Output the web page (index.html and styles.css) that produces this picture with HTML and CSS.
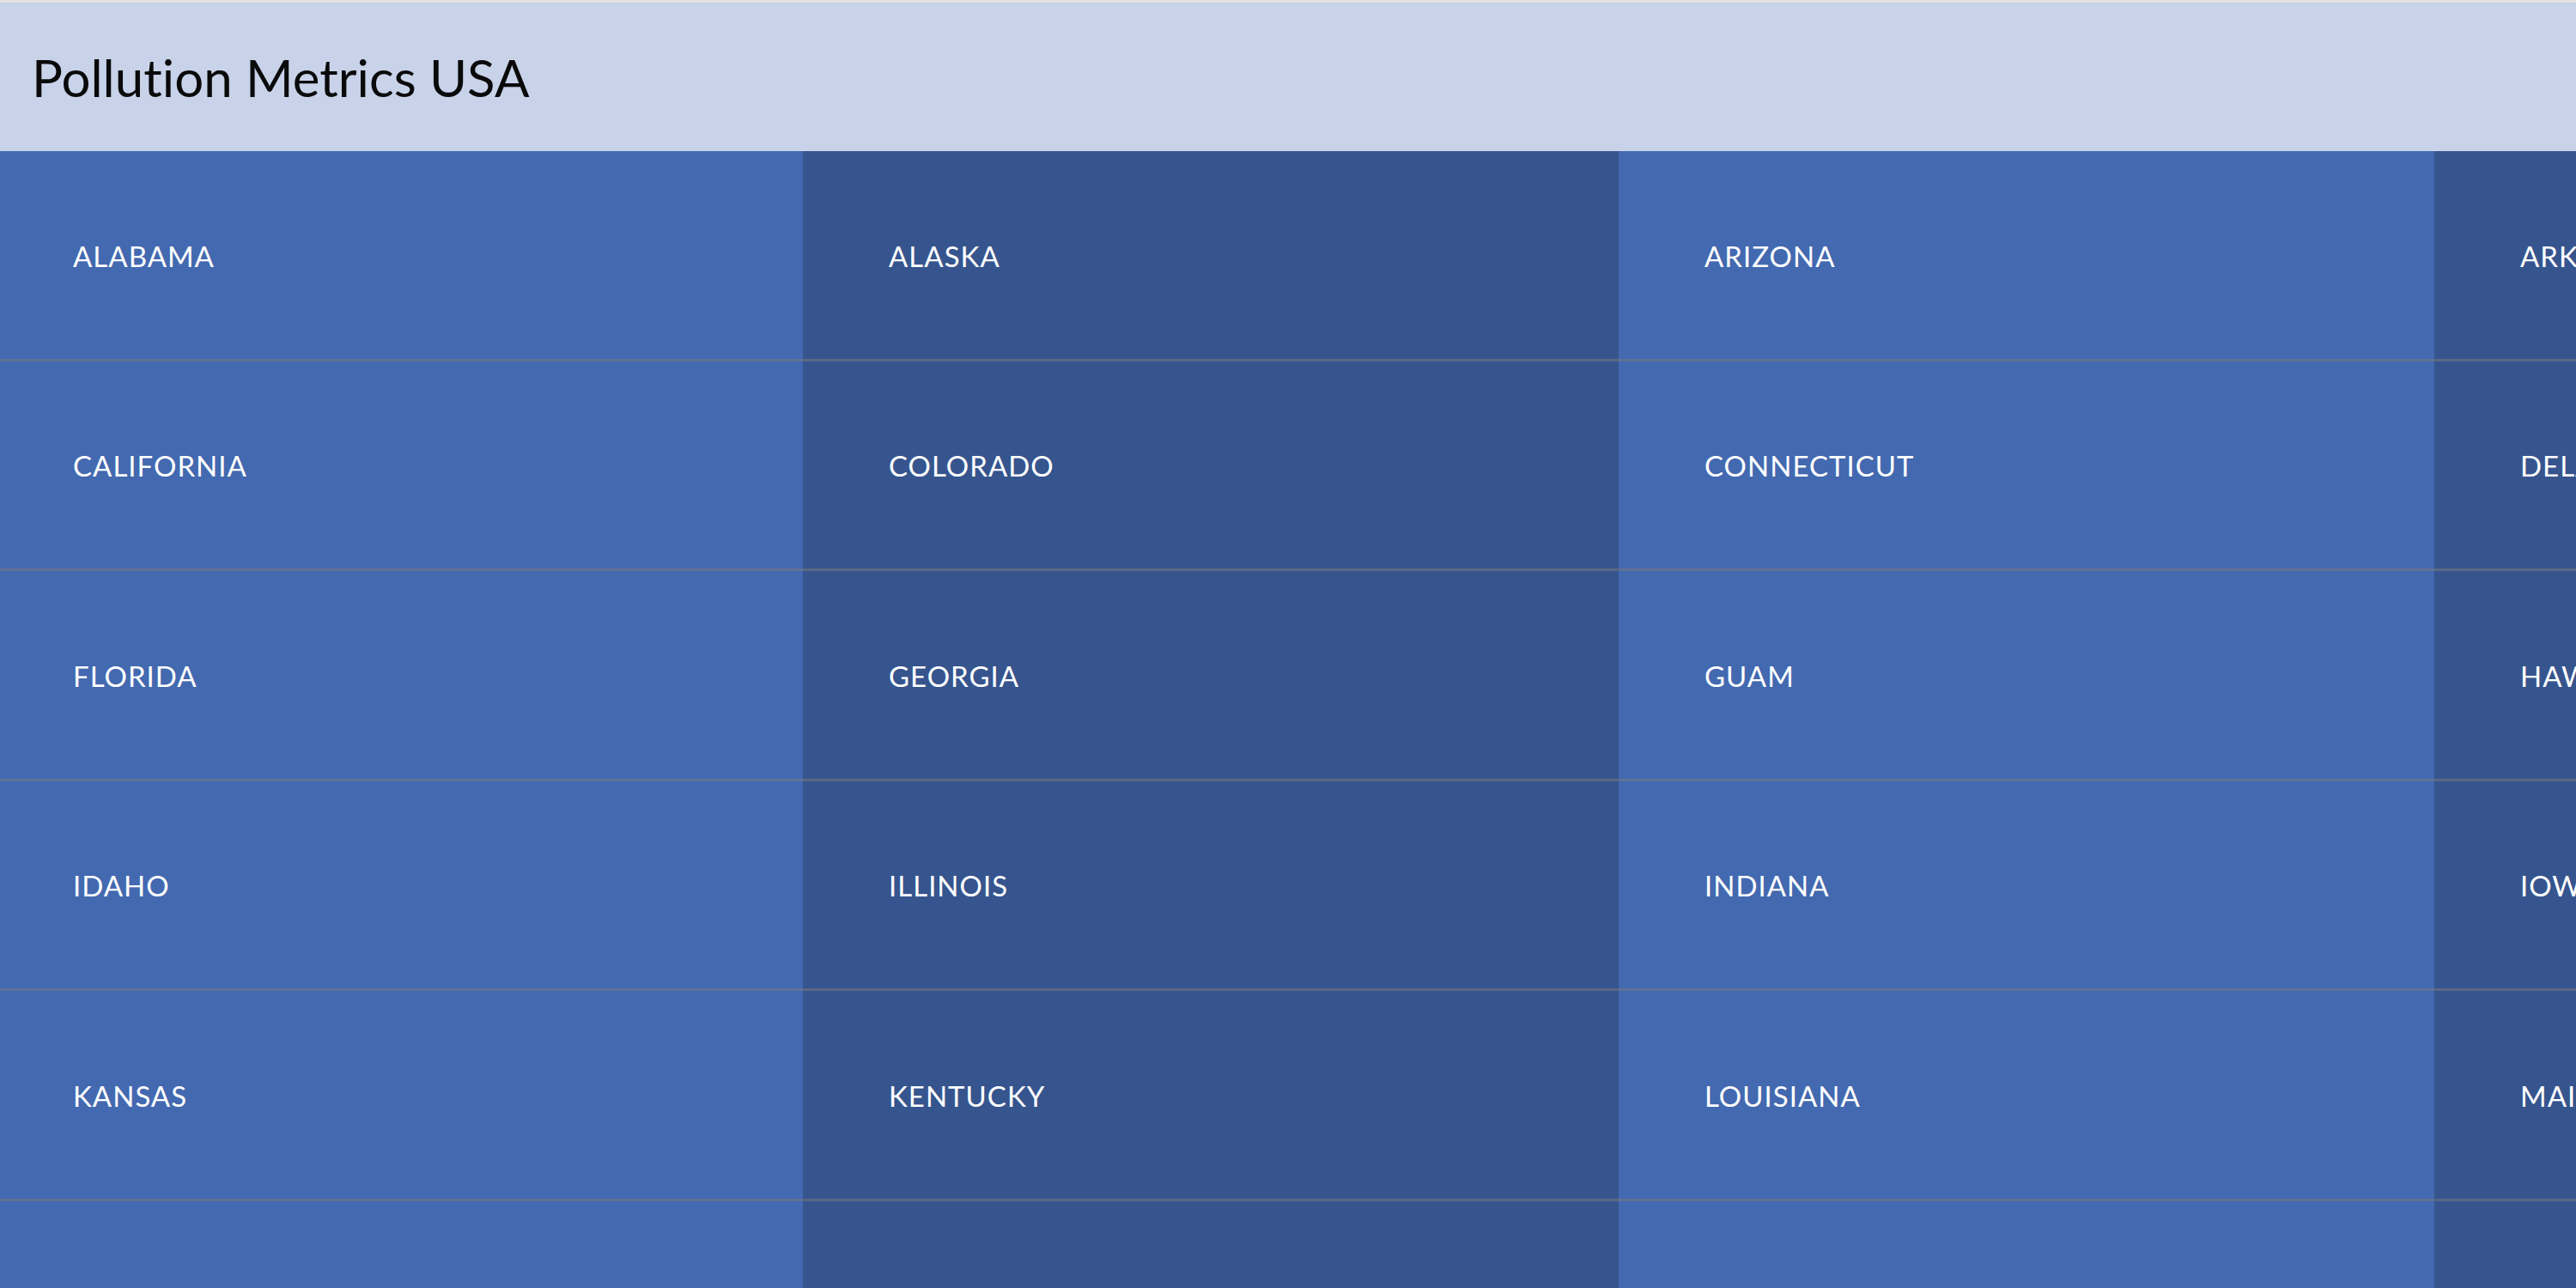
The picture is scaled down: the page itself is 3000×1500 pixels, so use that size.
FILE: index.html
```html
<!DOCTYPE html>
<html lang="en">
<head>
<meta charset="utf-8">
<title>Pollution Metrics USA</title>
<link rel="stylesheet" href="styles.css">
</head>
<body>
<header class="topbar">
  <h1 class="title">Pollution Metrics USA</h1>
</header>
<main class="states">
  <a class="state">ALABAMA</a>
  <a class="state">ALASKA</a>
  <a class="state">ARIZONA</a>
  <a class="state">ARKANSAS</a>
  <a class="state">CALIFORNIA</a>
  <a class="state">COLORADO</a>
  <a class="state">CONNECTICUT</a>
  <a class="state">DELAWARE</a>
  <a class="state">FLORIDA</a>
  <a class="state">GEORGIA</a>
  <a class="state">GUAM</a>
  <a class="state">HAWAII</a>
  <a class="state">IDAHO</a>
  <a class="state">ILLINOIS</a>
  <a class="state">INDIANA</a>
  <a class="state">IOWA</a>
  <a class="state">KANSAS</a>
  <a class="state">KENTUCKY</a>
  <a class="state">LOUISIANA</a>
  <a class="state">MAINE</a>
  <a class="state">MARYLAND</a>
  <a class="state">MASSACHUSETTS</a>
  <a class="state">MICHIGAN</a>
  <a class="state">MINNESOTA</a>
</main>
</body>
</html>
```

FILE: styles.css
```css
html, body {
  margin: 0;
  padding: 0;
}
body {
  font-family: Lato, "Liberation Sans", sans-serif;
  font-variant-ligatures: none;
  overflow: hidden;
  width: 3000px;
  height: 1500px;
  background: #4369b0;
}
.topbar {
  box-sizing: border-box;
  height: 176px;
  border-top: 3px solid #e2e2e2;
  background: #c8d2e9;
  display: flex;
  align-items: center;
  padding-left: 37px;
}
.title {
  margin: 0;
  font-size: 60px;
  font-weight: 400;
  line-height: 72px;
  color: #0a0a0a;
}
.states {
  display: grid;
  grid-template-columns: repeat(4, 950px);
  width: max-content;
  margin-left: -15px;
}
.state {
  box-sizing: border-box;
  height: 244.5px;
  border-bottom: 3px solid rgba(120, 120, 125, 0.55);
  display: flex;
  align-items: center;
  padding: 2px 0 0 100px;
  font-size: 33px;
  letter-spacing: 1px;
  color: #ffffff;
  background: #4369b0;
}
.state:nth-child(2n) {
  background: #36558e;
}
```
